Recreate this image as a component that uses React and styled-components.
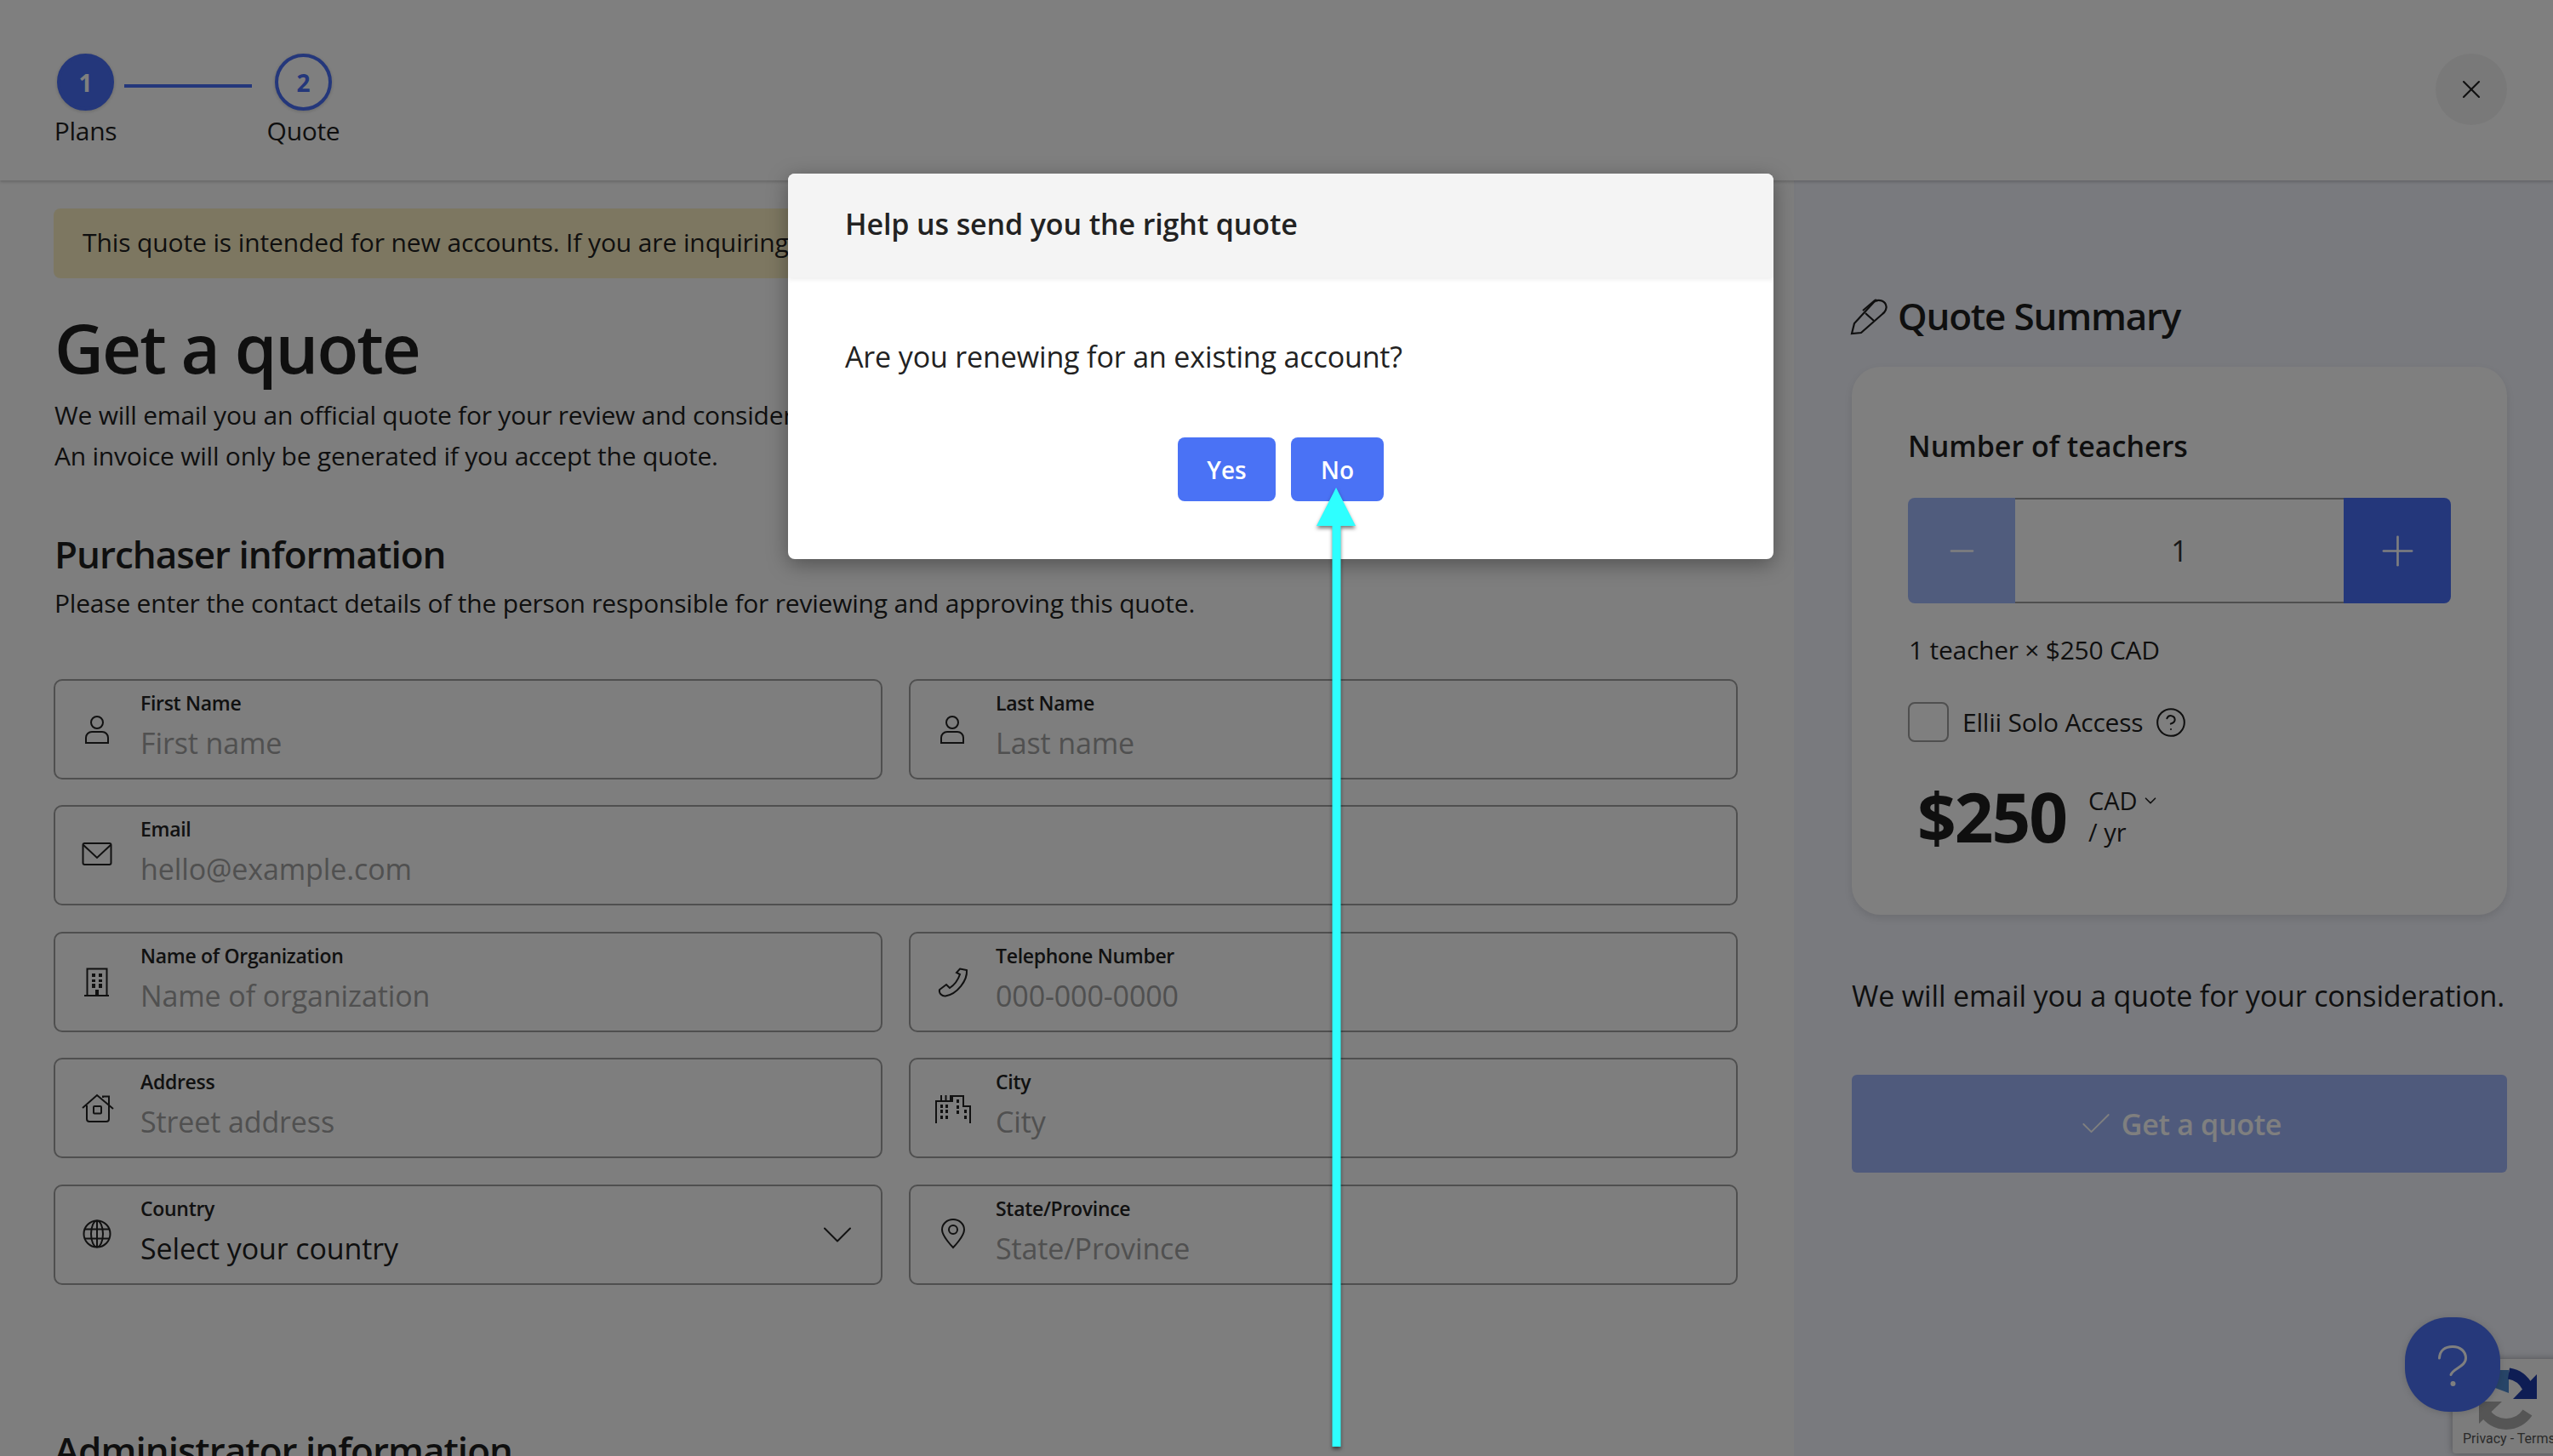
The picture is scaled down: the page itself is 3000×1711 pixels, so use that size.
import styled, { createGlobalStyle } from 'styled-components';
import { X, Plus, Minus, Check, ChevronDown, CircleHelp } from 'lucide-react';

const GlobalStyle = createGlobalStyle`
  html, body {
    margin: 0;
    padding: 0;
    width: 3000px;
    height: 1711px;
    overflow: hidden;
    background: #fff;
  }

  * {
    box-sizing: border-box;
  }

  body {
    font-family: "Open Sans", "Liberation Sans", sans-serif;
    color: #1f1f1f;
  }

  h1, h2, h3, p {
    margin: 0;
  }
`;

const Page = styled.div`
  position: relative;
  width: 3000px;
  height: 1711px;
  overflow: hidden;
`;

const Header = styled.header`
  display: flex;
  justify-content: space-between;
  align-items: flex-start;
  height: 212px;
  padding: 63px 54px 0 58px;
  background: #fff;
  box-shadow: 0 2px 3px rgba(0, 0, 0, 0.18);
  position: relative;
`;

const Steps = styled.div`
  display: flex;
`;

const Step = styled.div`
  display: flex;
  flex-direction: column;
  align-items: center;
  width: 85px;
`;

const StepDot = styled.div`
  display: flex;
  align-items: center;
  justify-content: center;
  width: 67px;
  height: 67px;
  border-radius: 50%;
  border: 4px solid #486ef6;
  background: ${props => (props.$active ? '#486ef6' : '#fff')};
  color: ${props => (props.$active ? '#fff' : '#486ef6')};
  font-size: 28px;
  font-weight: 700;
  box-shadow: 0 1px 4px rgba(0, 0, 0, 0.2);
`;

const StepLabel = styled.span`
  margin-top: 2px;
  font-size: 30px;
  line-height: 44px;
  letter-spacing: -0.3px;
`;

const StepLine = styled.div`
  width: 150px;
  height: 4px;
  margin: 36px 18px 0 3px;
  background: #486ef6;
`;

const CloseButton = styled.button`
  display: flex;
  align-items: center;
  justify-content: center;
  width: 84px;
  height: 84px;
  padding: 0;
  border: none;
  border-radius: 50%;
  background: #f3f3f3;
  color: #1f1f1f;
`;

const Main = styled.main`
  display: grid;
  grid-template-columns: 2108px 892px;
  height: 1499px;
`;

const Content = styled.section`
  padding: 33px 66px 0 63px;
  background: #fcfcfc;
`;

const Banner = styled.div`
  height: 82px;
  padding: 0 34px;
  border-radius: 8px;
  background: #faeec2;
  font-size: 30px;
  letter-spacing: -0.12px;
  line-height: 80px;
  white-space: nowrap;
  overflow: hidden;
`;

const Title = styled.h1`
  margin: 36px 0 0 1px;
  font-size: 80px;
  font-weight: 600;
  line-height: 90px;
  letter-spacing: -2px;
`;

const Lead = styled.p`
  margin: 11px 0 0 1px;
  font-size: 30px;
  line-height: 48px;
  letter-spacing: -0.23px;
`;

const SectionTitle = styled.h2`
  margin: ${props => props.$top}px 0 0 1px;
  font-size: 44px;
  font-weight: 600;
  line-height: 60px;
  letter-spacing: -1px;
`;

const SectionText = styled.p`
  margin: 4px 0 0 1px;
  font-size: 30px;
  line-height: 48px;
  letter-spacing: -0.21px;
`;

const FieldGrid = styled.div`
  display: grid;
  grid-template-columns: 974px 974px;
  column-gap: 31px;
  row-gap: 30.4px;
  margin-top: 65px;
`;

const Field = styled.div`
  display: flex;
  grid-column: ${props => (props.$wide ? '1 / span 2' : 'auto')};
  height: 118px;
  padding-left: 25px;
  border: 2px solid #9e9e9e;
  border-radius: 10px;
`;

const FieldIcon = styled.svg`
  flex: none;
  align-self: center;
  width: 60px;
  height: 60px;
  margin-bottom: 8px;
  fill: none;
  stroke: #222;
  stroke-width: 2;
`;

const FieldBody = styled.div`
  flex: 1;
  padding: 12px 0 0 15px;
`;

const FieldLabel = styled.div`
  font-size: 23px;
  font-weight: 600;
  line-height: 28px;
  letter-spacing: -0.3px;
  color: #222;
`;

const FieldValue = styled.div`
  margin-top: 11px;
  font-size: 34px;
  line-height: 44px;
  letter-spacing: -0.12px;
  color: ${props => (props.$filled ? '#1f1f1f' : '#a0a0a0')};
`;

const FieldChevron = styled.div`
  display: flex;
  align-items: center;
  margin-right: 21px;
  color: #222;
`;

const Sidebar = styled.aside`
  padding: 129px 54px 0 68px;
  background: #f2f4fc;
`;

const SummaryTitle = styled.h2`
  display: flex;
  align-items: flex-start;
  height: 60px;
  margin-left: -6px;
  font-size: 44px;
  font-weight: 600;
  line-height: 60px;
  letter-spacing: -1.2px;
`;

const PenIcon = styled.svg`
  flex: none;
  width: 60px;
  height: 60px;
  margin-top: 4px;
  fill: none;
  stroke: #1f1f1f;
  stroke-width: 2.2;
`;

const Card = styled.div`
  height: 644px;
  margin-top: 30px;
  padding: 69px 66px 0;
  border-radius: 34px;
  background: #fff;
  box-shadow: 0 4px 10px rgba(0, 0, 0, 0.1);
`;

const CardLabel = styled.h3`
  font-size: 34px;
  font-weight: 600;
  line-height: 48px;
`;

const Counter = styled.div`
  display: grid;
  grid-template-columns: 126px 1fr 126px;
  height: 124px;
  margin-top: 37px;
  border-radius: 8px;
  overflow: hidden;
`;

const CounterButton = styled.button`
  display: flex;
  align-items: center;
  justify-content: center;
  padding: 0;
  border: none;
  background: ${props => props.$color};
  color: #fff;
`;

const CounterValue = styled.div`
  display: flex;
  align-items: center;
  justify-content: center;
  border-top: 2px solid #9e9e9e;
  border-bottom: 2px solid #9e9e9e;
  font-size: 34px;
  color: #333;
`;

const CountLine = styled.p`
  margin: 33px 0 0 1px;
  font-size: 30px;
  line-height: 44px;
  letter-spacing: -0.25px;
`;

const Option = styled.div`
  display: flex;
  align-items: center;
  height: 47px;
  margin-top: 39px;
  font-size: 30px;
  letter-spacing: -0.2px;
`;

const Checkbox = styled.div`
  flex: none;
  width: 48px;
  height: 47px;
  margin-right: 16px;
  border: 2px solid #9e9e9e;
  border-radius: 8px;
`;

const OptionHelp = styled.span`
  display: flex;
  margin-left: 14px;
`;

const Price = styled.div`
  display: flex;
  align-items: center;
  height: 100px;
  margin: 37px 0 0 11px;
`;

const Amount = styled.div`
  font-size: 80px;
  font-weight: 700;
  line-height: 100px;
  letter-spacing: -2px;
`;

const PriceMeta = styled.div`
  margin-left: 26px;
  font-size: 29px;
  line-height: 37px;
`;

const Currency = styled.div`
  display: flex;
  align-items: center;
  gap: 4px;
`;

const SummaryNote = styled.p`
  margin-top: 70px;
  font-size: 34px;
  line-height: 50px;
  letter-spacing: -0.15px;
  white-space: nowrap;
`;

const SubmitButton = styled.button`
  display: flex;
  align-items: center;
  justify-content: center;
  gap: 8px;
  width: 100%;
  height: 115px;
  margin-top: 68px;
  border: none;
  border-radius: 6px;
  background: #9eb4f8;
  color: #fff;
  font-family: inherit;
  font-size: 34px;
  font-weight: 600;
  letter-spacing: -0.3px;
`;

const Badge = styled.div`
  position: absolute;
  left: 2882px;
  top: 1597px;
  width: 256px;
  height: 111px;
  border-radius: 4px;
  background: #f9f9f9;
  box-shadow: 0 0 8px rgba(0, 0, 0, 0.35);
`;

const BadgeLogo = styled.svg`
  display: block;
  width: 118px;
  height: 83px;
`;

const BadgeLinks = styled.div`
  padding-left: 12px;
  font-family: Roboto, "Liberation Sans", sans-serif;
  font-size: 16px;
  line-height: 22px;
  color: #555;
`;

const HelpWidget = styled.button`
  position: absolute;
  left: 2826px;
  top: 1548px;
  display: flex;
  align-items: center;
  justify-content: center;
  width: 112px;
  height: 111px;
  padding: 0;
  border: none;
  border-radius: 46%;
  background: #4c72f6;
  box-shadow: 0 1px 8px rgba(0, 0, 0, 0.15);
`;

const Overlay = styled.div`
  position: absolute;
  inset: 0;
  background: rgba(0, 0, 0, 0.5);
`;

const Modal = styled.div`
  position: absolute;
  left: 926px;
  top: 204px;
  width: 1158px;
  height: 453px;
  border-radius: 8px;
  background: #fff;
  box-shadow: 0 6px 24px rgba(0, 0, 0, 0.35);
  overflow: hidden;
`;

const ModalHeader = styled.div`
  height: 122px;
  padding-left: 67px;
  background: #f4f4f4;
  box-shadow: 0 2px 6px rgba(0, 0, 0, 0.08);
  font-size: 34px;
  font-weight: 600;
  line-height: 119px;
  letter-spacing: -0.12px;
  color: #222;
`;

const ModalText = styled.p`
  padding: 68px 0 0 67px;
  font-size: 34px;
  line-height: 50px;
  letter-spacing: -0.14px;
  color: #222;
`;

const ModalActions = styled.div`
  display: flex;
  justify-content: center;
  gap: 18px;
  margin-top: 70px;
`;

const ModalButton = styled.button`
  width: ${props => props.$width}px;
  height: 75px;
  padding: 0;
  border: none;
  border-radius: 8px;
  background: #4a72f5;
  color: #fff;
  font-family: inherit;
  font-size: 28px;
  font-weight: 600;
`;

const Arrow = styled.svg`
  position: absolute;
  left: 1547px;
  top: 573px;
  width: 46px;
  height: 1127px;
  overflow: visible;
  filter: drop-shadow(0 3px 2px rgba(0, 0, 0, 0.5));
`;

const PersonIcon = () => (
  <FieldIcon viewBox="0 0 60 60">
    <circle cx="24" cy="26" r="7" />
    <path d="M11 50V44a7 7 0 0 1 7-7h12a7 7 0 0 1 7 7v6Z" />
  </FieldIcon>
);

const MailIcon = () => (
  <FieldIcon viewBox="0 0 60 60">
    <rect x="7.500" y="20" width="33" height="25" rx="2" />
    <path d="M8 22l16 15 16-15" />
  </FieldIcon>
);

const BuildingIcon = () => (
  <FieldIcon viewBox="0 0 60 60">
    <path d="M12.500 50V18.500h23V50M9 50h29" />
    <path
      fill="#222"
      stroke="none"
      d="M18 24h4v4h-4zM26 24h4v4h-4zM18 31h4v3h-4zM26 31h4v3h-4zM18 36h4v5h-4zM26 36h4v5h-4zM22 43h4v7h-4z"
    />
  </FieldIcon>
);

const PhoneIcon = () => (
  <FieldIcon viewBox="0 0 60 60">
    <path d="M33 18.500l8 1.500c1 12-11 28-25 30.500-4 .5-8-3.500-7-7.500l8-6 4 4c6-4 10-10 12-16l-4-2Z" />
  </FieldIcon>
);

const HouseIcon = () => (
  <FieldIcon viewBox="0 -2 60 60">
    <path d="M7 32l17-15 19 16M31 20v-1.500h7V29M12 29v16a3 3 0 0 0 3 3h20a3 3 0 0 0 3-3V29" />
    <rect x="20" y="30" width="9" height="8.500" rx="1" />
  </FieldIcon>
);

const CityIcon = () => (
  <FieldIcon viewBox="5 -2 60 60">
    <path d="M10 50V24h19v-6h13v12h8v20M16 17v7M21.500 17v7M27 17v7" />
    <path
      fill="#222"
      stroke="none"
      d="M15 28h3v4h-3zM21 28h3v4h-3zM15 34h3v4h-3zM21 34h3v4h-3zM15 41h3v4h-3zM21 41h3v4h-3zM34 22h3v4h-3zM34 29h3v4h-3zM34 35h3v4h-3zM43 34h3v4h-3zM43 41h3v4h-3z"
    />
  </FieldIcon>
);

const GlobeIcon = () => (
  <FieldIcon viewBox="0 0 60 60">
    <circle cx="24" cy="33" r="15.500" />
    <ellipse cx="24" cy="33" rx="7" ry="15.500" />
    <path d="M24 17.500v31M10 27.500h28M10 38.500h28" />
  </FieldIcon>
);

const PinIcon = () => (
  <FieldIcon viewBox="0 0 60 60">
    <path d="M25 49S12 36 12 28a13 12 0 0 1 26 0c0 8-13 21-13 21Z" />
    <circle cx="25" cy="28" r="5" />
  </FieldIcon>
);

const fields = [
  { label: 'First Name', value: 'First name', icon: PersonIcon },
  { label: 'Last Name', value: 'Last name', icon: PersonIcon },
  { label: 'Email', value: 'hello@example.com', icon: MailIcon, wide: true },
  { label: 'Name of Organization', value: 'Name of organization', icon: BuildingIcon },
  { label: 'Telephone Number', value: '000-000-0000', icon: PhoneIcon },
  { label: 'Address', value: 'Street address', icon: HouseIcon },
  { label: 'City', value: 'City', icon: CityIcon },
  { label: 'Country', value: 'Select your country', icon: GlobeIcon, select: true },
  { label: 'State/Province', value: 'State/Province', icon: PinIcon },
];

export default function App() {
  return (
    <Page>
      <GlobalStyle />
      <Header>
        <Steps>
          <Step>
            <StepDot $active>1</StepDot>
            <StepLabel>Plans</StepLabel>
          </Step>
          <StepLine />
          <Step>
            <StepDot>2</StepDot>
            <StepLabel>Quote</StepLabel>
          </Step>
        </Steps>
        <CloseButton>
          <X size={36} strokeWidth={1.4} />
        </CloseButton>
      </Header>
      <Main>
        <Content>
          <Banner>This quote is intended for new accounts. If you are inquiring about an existing account, please contact us.</Banner>
          <Title>Get a quote</Title>
          <Lead>
            We will email you an official quote for your review and consideration.
            <br />
            An invoice will only be generated if you accept the quote.
          </Lead>
          <SectionTitle $top={61}>Purchaser information</SectionTitle>
          <SectionText>Please enter the contact details of the person responsible for reviewing and approving this quote.</SectionText>
          <FieldGrid>
            {fields.map(({ label, value, icon: Icon, wide, select }) => (
              <Field key={label} $wide={wide}>
                <Icon />
                <FieldBody>
                  <FieldLabel>{label}</FieldLabel>
                  <FieldValue $filled={select}>{value}</FieldValue>
                </FieldBody>
                {select && (
                  <FieldChevron>
                    <ChevronDown size={60} strokeWidth={0.8} />
                  </FieldChevron>
                )}
              </Field>
            ))}
          </FieldGrid>
          <SectionTitle $top={164}>Administrator information</SectionTitle>
        </Content>
        <Sidebar>
          <SummaryTitle>
            <PenIcon viewBox="0 0 60 60">
              <path d="M6 47l3-12 23-25c4-4 12-2 14 3 2 4-1 9-4 11L17 46Z" />
              <path d="M22 23l10 9M19 20L33 8c1-1 3 0 2 1" />
            </PenIcon>
            Quote Summary
          </SummaryTitle>
          <Card>
            <CardLabel>Number of teachers</CardLabel>
            <Counter>
              <CounterButton $color="#a0b8fa">
                <Minus size={43} strokeWidth={1.4} />
              </CounterButton>
              <CounterValue>1</CounterValue>
              <CounterButton $color="#486ef6">
                <Plus size={57} strokeWidth={1.1} />
              </CounterButton>
            </Counter>
            <CountLine>1 teacher × $250 CAD</CountLine>
            <Option>
              <Checkbox />
              Ellii Solo Access
              <OptionHelp>
                <CircleHelp size={38} strokeWidth={1.3} />
              </OptionHelp>
            </Option>
            <Price>
              <Amount>$250</Amount>
              <PriceMeta>
                <Currency>
                  CAD
                  <ChevronDown size={22} strokeWidth={1.8} />
                </Currency>
                <div>/ yr</div>
              </PriceMeta>
            </Price>
          </Card>
          <SummaryNote>We will email you a quote for your consideration.</SummaryNote>
          <SubmitButton>
            <Check size={44} strokeWidth={1} />
            Get a quote
          </SubmitButton>
        </Sidebar>
      </Main>
      <Badge>
        <BadgeLogo viewBox="0 0 118 83" preserveAspectRatio="xMinYMin">
          <path fill="#4f8ad0" d="M51 13h15v27l-16-6Z" />
          <path fill="none" stroke="#1c3aa9" strokeWidth="13" d="M66 17a30 30 0 0 1 22 16" />
          <path fill="#1c3aa9" d="M99 18v29H71Z" />
          <path fill="none" stroke="#ababab" strokeWidth="13" d="M88 63a30 30 0 0 1-50 0" />
          <path fill="#ababab" d="M31 50v26l27-26Z" />
        </BadgeLogo>
        <BadgeLinks>Privacy - Terms</BadgeLinks>
      </Badge>
      <HelpWidget>
        <svg width="60" height="60" viewBox="0 0 60 60" fill="none" stroke="#fff" strokeWidth="3" strokeLinecap="round">
          <path d="M14.500 22C15 13 21 8.500 30 8.500c9 0 15.500 5.500 15.500 13.500 0 10-15 12-17.500 19.500" />
          <circle cx="30.500" cy="52" r="3" fill="#fff" stroke="none" />
        </svg>
      </HelpWidget>
      <Overlay />
      <Modal>
        <ModalHeader>Help us send you the right quote</ModalHeader>
        <ModalText>Are you renewing for an existing account?</ModalText>
        <ModalActions>
          <ModalButton $width={115}>Yes</ModalButton>
          <ModalButton $width={109}>No</ModalButton>
        </ModalActions>
      </Modal>
      <Arrow viewBox="0 0 46 1127">
        <path fill="#2effff" d="M23 0L46 45H28.500V1127H18.500V45H0Z" />
      </Arrow>
    </Page>
  );
}
